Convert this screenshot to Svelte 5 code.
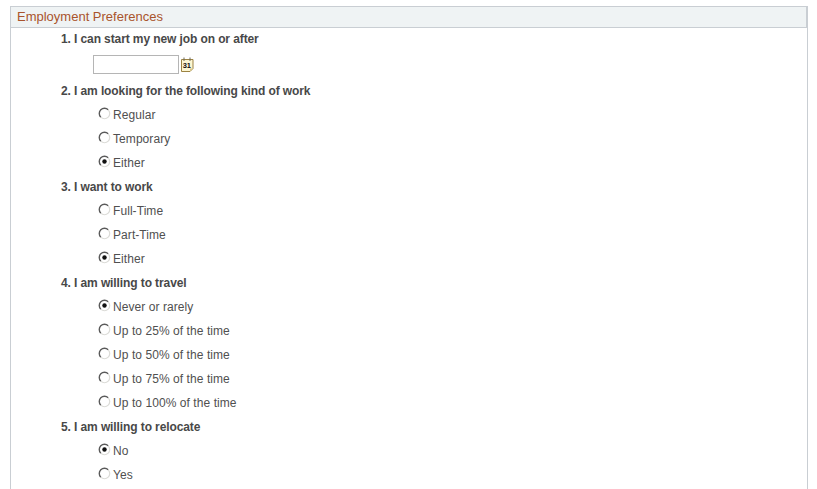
<script>
	const questions = [
		{ label: '2. I am looking for the following kind of work', options: ['Regular', 'Temporary', 'Either'], selected: 2 },
		{ label: '3. I want to work', options: ['Full-Time', 'Part-Time', 'Either'], selected: 2 },
		{ label: '4. I am willing to travel', options: ['Never or rarely', 'Up to 25% of the time', 'Up to 50% of the time', 'Up to 75% of the time', 'Up to 100% of the time'], selected: 0 },
		{ label: '5. I am willing to relocate', options: ['No', 'Yes'], selected: 0 }
	];
</script>

<main>
	<section class="panel">
		<h2>Employment Preferences</h2>
		<div class="body">
			<div class="question first">1. I can start my new job on or after</div>
			<div class="date-row">
				<div class="date-input"></div>
				<svg class="calendar" width="13" height="15" viewBox="0 0 13 15">
					<path d="M.5 2.5h11.5v9l-3 3H.5z" fill="#fdf6d2" stroke="#9c8342" />
					<path d="M3 .5v3.5M9 .5v3.5" stroke="#6f6a58" />
					<path d="M12 11.5l-3 3v-3z" fill="#d8c68a" />
					<text x="5.8" y="11" text-anchor="middle">31</text>
				</svg>
			</div>
			{#each questions as q}
				<div class="question">{q.label}</div>
				{#each q.options as opt, i}
					<div class="option">
						<svg class="radio" width="13" height="13" viewBox="0 0 13 13">
							<circle cx="6.5" cy="6.5" r="5.2" fill="#fff" />
							<path d="M2.8 10.2A5.2 5.2 0 0 1 10.2 2.8" fill="none" stroke="#5a5a5a" stroke-width="1.4" />
							<path d="M10.2 2.8A5.2 5.2 0 0 1 2.8 10.2" fill="none" stroke="#dcdcd8" stroke-width="1.2" />
							{#if i === q.selected}
								<circle cx="6.5" cy="6.5" r="2.2" fill="#111" />
							{/if}
						</svg>
						<span>{opt}</span>
					</div>
				{/each}
			{/each}
		</div>
	</section>
</main>

<style>
	:global(body) {
		margin: 0;
		background: #fff;
		font-family: 'Liberation Sans', Arial, sans-serif;
		font-size: 12px;
		color: #484848;
	}

	main {
		height: 489px;
		overflow: hidden;
		padding: 6px 9px 0 10px;
	}

	.panel {
		border-right: 1px solid #c9ced3;
		border-left: 1px solid #c9ced3;
		height: 483px;
	}

	h2 {
		margin: 0 -1px 0 -1px;
		height: 20px;
		line-height: 20px;
		padding-left: 6px;
		font-size: 13px;
		font-weight: normal;
		color: #a9542c;
		background: #eff3f4;
		border-top: 1px solid #c9ced3;
		border-bottom: 1px solid #c9ced3;
		border-left: 1px solid #c9ced3;
		border-right: 2px solid #c9ced3;
	}

	.body {
		padding-left: 50px;
	}

	.question {
		height: 24px;
		line-height: 24px;
		font-weight: bold;
		letter-spacing: -0.1px;
	}

	.first {
		height: 22px;
		line-height: 22px;
	}

	.date-row {
		height: 29px;
		display: flex;
		align-items: center;
		gap: 2px;
		padding-left: 32px;
		box-sizing: border-box;
	}

	.date-input {
		width: 84px;
		height: 17px;
		background: #fff;
		border: 1px solid #b5b5b5;
	}

	.calendar {
		display: block;
	}

	.calendar text {
		font-family: 'Liberation Sans', Arial, sans-serif;
		font-size: 7.5px;
		font-weight: bold;
		fill: #111;
	}

	.option {
		height: 24px;
		display: flex;
		align-items: center;
		padding-left: 37px;
		gap: 2px;
		letter-spacing: 0.07px;
		color: #505050;
	}

	.radio {
		display: block;
		margin-top: -4px;
	}

	.option span {
		line-height: 24px;
	}
</style>
